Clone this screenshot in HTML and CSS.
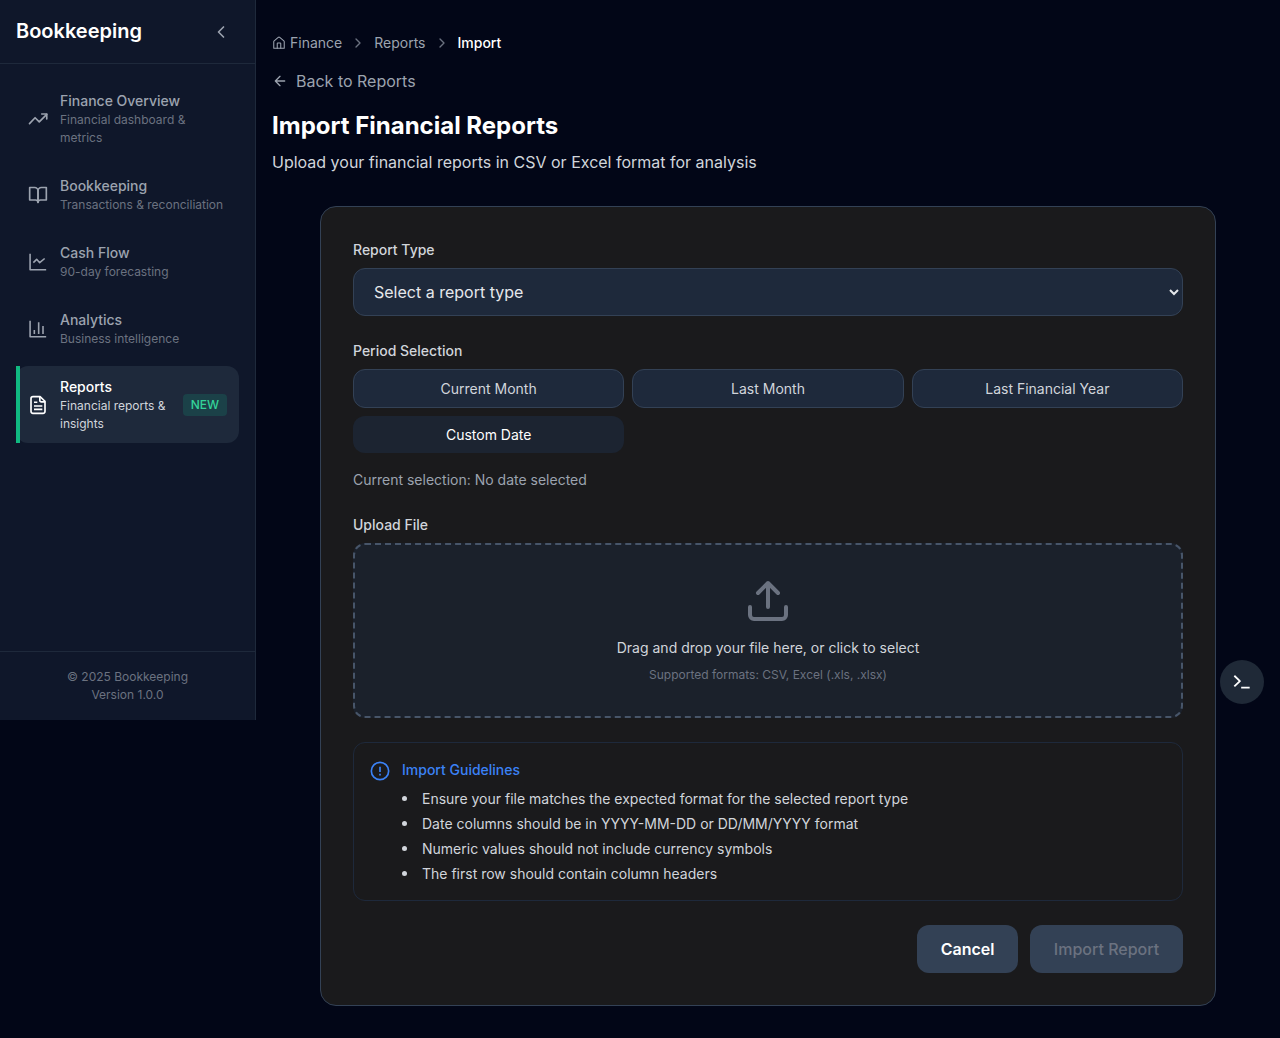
FILE: index.html
```html
<!DOCTYPE html>
<html lang="en">
<head>
<meta charset="utf-8">
<title>Import Financial Reports</title>
<link rel="stylesheet" href="styles.css">
</head>
<body>
<div class="layout">
  <aside class="sidebar">
    <header class="brand">
      <span class="brand-name">Bookkeeping</span>
      <button class="collapse" aria-label="Collapse"><svg class="icon" width="20" height="20" viewBox="0 0 24 24" stroke-width="2"><path d="m15 18-6-6 6-6"/></svg></button>
    </header>
    <nav class="nav">
      <a class="nav-item">
        <svg class="icon" width="20" height="20" viewBox="0 0 24 24" stroke-width="2"><path d="m22.500 6.500-9 9-5-5L1.800 17.500"/><path d="M16.500 6h6v6"/></svg>
        <span class="nav-text"><span class="nav-title">Finance Overview</span><span class="nav-desc">Financial dashboard &amp; metrics</span></span>
      </a>
      <a class="nav-item">
        <svg class="icon" width="20" height="20" viewBox="0 0 24 24" stroke-width="2"><path d="M2 3h6a4 4 0 0 1 4 4v14a3 3 0 0 0-3-3H2z"/><path d="M22 3h-6a4 4 0 0 0-4 4v14a3 3 0 0 1 3-3h7z"/></svg>
        <span class="nav-text"><span class="nav-title">Bookkeeping</span><span class="nav-desc">Transactions &amp; reconciliation</span></span>
      </a>
      <a class="nav-item">
        <svg class="icon sharp" width="20" height="20" viewBox="0 0 24 24" stroke-width="1.900"><path d="M2.500 2v19.200h19.300"/><path d="m6.400 12.800 4-4 3.600 4 6-5"/></svg>
        <span class="nav-text"><span class="nav-title">Cash Flow</span><span class="nav-desc">90-day forecasting</span></span>
      </a>
      <a class="nav-item">
        <svg class="icon sharp" width="20" height="20" viewBox="0 0 24 24" stroke-width="1.900"><path d="M2.500 2v19.200h19.300"/><path d="M7.600 18v-4.800M12.800 18V4M18 18V8.400"/></svg>
        <span class="nav-text"><span class="nav-title">Analytics</span><span class="nav-desc">Business intelligence</span></span>
      </a>
      <a class="nav-item active">
        <svg class="icon sharp" width="20" height="20" viewBox="0 0 24 24" stroke-width="2"><path d="M14.500 2H6a2.400 2.400 0 0 0-2.400 2.400v15.200A2.400 2.400 0 0 0 6 22h12a2.400 2.400 0 0 0 2.400-2.400V7.500z"/><path d="M14.200 2v4.500a1.800 1.800 0 0 0 1.800 1.800h4.500M7.200 8.700h4M7.200 13.200h10M7.200 17.200h10"/></svg>
        <span class="nav-text"><span class="nav-title">Reports</span><span class="nav-desc">Financial reports &amp; insights</span></span>
        <span class="tag">NEW</span>
      </a>
    </nav>
    <footer class="side-foot">© 2025 Bookkeeping<br>Version 1.0.0</footer>
  </aside>

  <main class="main">
    <nav class="crumbs">
      <a class="crumb"><svg class="icon" width="14" height="14" viewBox="0 0 24 24" stroke-width="1.800"><path d="M15 21v-8a1 1 0 0 0-1-1h-4a1 1 0 0 0-1 1v8"/><path d="M3 10a2 2 0 0 1 .709-1.528l7-6a2 2 0 0 1 2.582 0l7 6A2 2 0 0 1 21 10v11H3z"/></svg>Finance</a>
      <svg class="icon sep" width="16" height="16" viewBox="0 0 24 24" stroke-width="2"><path d="m9 18 6-6-6-6"/></svg>
      <a class="crumb">Reports</a>
      <svg class="icon sep" width="16" height="16" viewBox="0 0 24 24" stroke-width="2"><path d="m9 18 6-6-6-6"/></svg>
      <span class="crumb current">Import</span>
    </nav>
    <a class="back"><svg class="icon" width="16" height="16" viewBox="0 0 24 24" stroke-width="2"><path d="m12 19-7-7 7-7M19 12H5"/></svg>Back to Reports</a>
    <h1 class="title">Import Financial Reports</h1>
    <p class="subtitle">Upload your financial reports in CSV or Excel format for analysis</p>

    <section class="card">
      <label class="label" for="type">Report Type</label>
      <select class="select" id="type"><option>Select a report type</option></select>

      <div class="label">Period Selection</div>
      <div class="periods">
        <button class="period">Current Month</button>
        <button class="period">Last Month</button>
        <button class="period">Last Financial Year</button>
        <button class="period chosen">Custom Date</button>
      </div>
      <p class="selection">Current selection: No date selected</p>

      <div class="label">Upload File</div>
      <div class="drop">
        <svg class="icon" width="48" height="48" viewBox="0 0 24 24" stroke-width="2"><path d="M21 15v4a2 2 0 0 1-2 2H5a2 2 0 0 1-2-2v-4M17 8l-5-5-5 5M12 3v12"/></svg>
        <p class="drop-main">Drag and drop your file here, or click to select</p>
        <p class="drop-hint">Supported formats: CSV, Excel (.xls, .xlsx)</p>
      </div>

      <div class="guide">
        <svg class="icon sharp" width="20" height="20" viewBox="0 0 24 24" stroke-width="2"><circle cx="12" cy="12" r="10.400"/><path d="M12 7v6.200M12 15.200v2.200"/></svg>
        <div class="guide-body">
          <h2 class="guide-title">Import Guidelines</h2>
          <ul class="guide-list">
            <li>Ensure your file matches the expected format for the selected report type</li>
            <li>Date columns should be in YYYY-MM-DD or DD/MM/YYYY format</li>
            <li>Numeric values should not include currency symbols</li>
            <li>The first row should contain column headers</li>
          </ul>
        </div>
      </div>

      <div class="actions">
        <button class="btn">Cancel</button>
        <button class="btn off">Import Report</button>
      </div>
    </section>
  </main>
</div>
<button class="console" aria-label="Console"><svg class="icon sharp" width="20" height="20" viewBox="0 0 24 24" stroke-width="2.200"><path d="m2.800 4.500 6.700 6.400-6.700 6.400M11 18.800h10.200"/></svg></button>
</body>
</html>
```
FILE: styles.css
```css
* { box-sizing: border-box; margin: 0; padding: 0; }
body {
  background: #020617;
  color: #d1d5db;
  font-family: Inter, "Liberation Sans", sans-serif;
  font-size: 16px;
  line-height: 1.5;
}
button, select { font: inherit; color: inherit; border: 0; }
.icon { display: block; flex: none; fill: none; stroke: currentColor; stroke-linecap: round; stroke-linejoin: round; }
.sharp { stroke-linecap: butt; }

.layout { display: flex; align-items: flex-start; min-height: 1038px; }
.sidebar {
  display: flex; flex-direction: column; flex: none;
  width: 256px; height: 720px;
  background: #0f172a;
  border-right: 1px solid #1e293b;
}
.brand {
  display: flex; align-items: center; justify-content: space-between;
  height: 64px; padding: 0 24px 0 16px;
  border-bottom: 1px solid #1e293b;
}
.brand-name { font-size: 20px; font-weight: 600; line-height: 28px; color: #fff; padding-bottom: 2px; }
.collapse { background: none; color: #9ca3af; }
.nav { flex: 1; display: flex; flex-direction: column; gap: 8px; padding: 16px; }
.nav-item {
  position: relative;
  display: flex; align-items: center; gap: 12px;
  padding: 10px 12px; border-radius: 12px;
  color: #9ca3af;
}
.nav-text { flex: 1; display: flex; flex-direction: column; min-width: 0; }
.nav-title { font-size: 14px; font-weight: 500; line-height: 21px; }
.nav-desc { font-size: 12px; line-height: 18px; color: #6b7280; }
.active { background: #1e293b; color: #fff; }
.active .nav-desc { color: #d1d5db; }
.active::before { content: ""; position: absolute; left: 0; top: 0; bottom: 0; width: 4px; background: #10b981; }
.tag { padding: 2px 8px; border-radius: 4px; background: #1b4148; color: #34d399; font-size: 12px; font-weight: 500; line-height: 18px; }
.side-foot { height: 69px; padding-top: 16px; border-top: 1px solid #1e293b; text-align: center; font-size: 12px; line-height: 18px; color: #6b7280; }

.main { flex: 1; min-width: 0; padding: 32px 64px 32px 16px; }
.crumbs { display: flex; align-items: center; gap: 8px; height: 21px; font-size: 14px; color: #9ca3af; }
.crumb { display: flex; align-items: center; gap: 4px; }
.current { color: #fff; font-weight: 500; }
.sep { color: #6b7280; }
.back { display: flex; align-items: center; gap: 8px; margin-top: 16px; line-height: 24px; color: #9ca3af; }
.title { margin-top: 15px; font-size: 24px; font-weight: 700; line-height: 36px; color: #fff; }
.subtitle { margin-top: 6px; line-height: 24px; color: #d1d5db; }

.card {
  margin: 32px 0 0 48px; padding: 32px;
  background: #1a1a1c;
  border: 1px solid #334155; border-radius: 16px;
}
.label { display: block; margin-bottom: 8px; font-size: 14px; font-weight: 500; line-height: 21px; }
.select {
  display: block; width: 100%; height: 48px; margin-bottom: 24px; padding: 0 0 0 16px;
  background: #1e293b; color: #e5e7eb;
  border: 1px solid #334155; border-radius: 12px;
}
.periods { display: grid; grid-template-columns: repeat(3, 1fr); gap: 8px; }
.period { height: 39px; background: #1e293b; border: 1px solid #334155; border-radius: 12px; font-size: 14px; color: #d1d5db; }
.chosen { height: 37px; background: #1c2431; border: 0; color: #fff; }
.selection { margin: 16px 0 24px; font-size: 14px; line-height: 21px; color: #9ca3af; }
.drop {
  display: flex; flex-direction: column; align-items: center;
  padding: 32px; background: #1b212b;
  border: 2px dashed #475569; border-radius: 12px;
  color: #6b7280;
}
.drop-main { margin-top: 12px; font-size: 14px; line-height: 21px; color: #d1d5db; }
.drop-hint { margin-top: 8px; font-size: 12px; line-height: 18px; }
.guide { display: flex; gap: 12px; margin-top: 24px; padding: 16px; border: 1px solid #1e293b; border-radius: 12px; }
.guide .icon { margin-top: 2px; color: #3b82f6; }
.guide-title { font-size: 14px; font-weight: 500; line-height: 21px; color: #3b82f6; }
.guide-list { display: grid; gap: 4px; margin-top: 8px; list-style: none; font-size: 14px; line-height: 21px; }
.guide-list li { display: flex; align-items: center; gap: 15px; }
.guide-list li::before { content: ""; width: 5px; height: 5px; border-radius: 50%; background: currentColor; }
.actions { display: flex; justify-content: flex-end; gap: 12px; margin-top: 24px; }
.btn { height: 48px; padding: 0 23.500px; background: #334155; border-radius: 12px; font-weight: 600; color: #fff; }
.off { width: 153px; color: #6b7280; font-weight: 500; }
.console {
  position: fixed; left: 1220px; top: 660px;
  display: grid; place-items: center;
  width: 44px; height: 44px; border-radius: 50%;
  background: #1f2937; color: #fff;
}
```
